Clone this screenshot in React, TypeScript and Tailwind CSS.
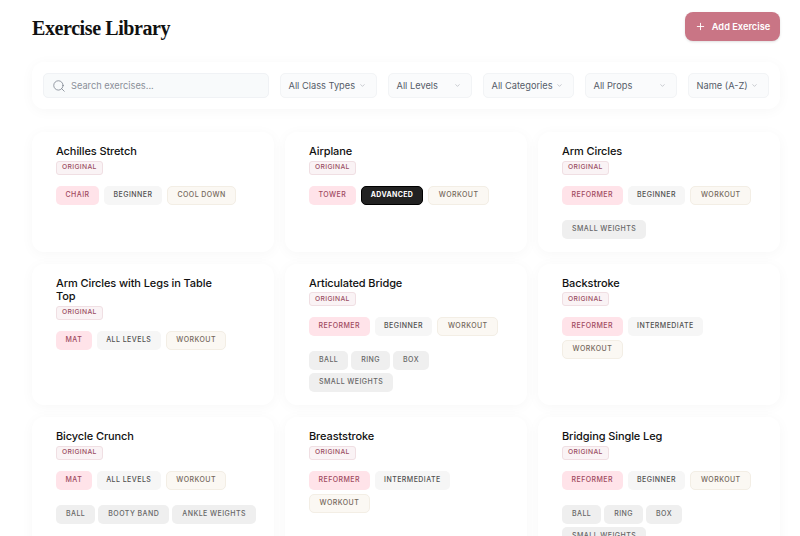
import { ChevronDown, Plus, Search } from "lucide-react";

type Ex = { name: string; a: string; level: string; cat: string; props?: string[] };

const data: Ex[] = [
  { name: "Achilles Stretch", a: "CHAIR", level: "BEGINNER", cat: "COOL DOWN" },
  { name: "Airplane", a: "TOWER", level: "ADVANCED", cat: "WORKOUT" },
  { name: "Arm Circles", a: "REFORMER", level: "BEGINNER", cat: "WORKOUT", props: ["SMALL WEIGHTS"] },
  { name: "Arm Circles with Legs in Table Top", a: "MAT", level: "ALL LEVELS", cat: "WORKOUT" },
  { name: "Articulated Bridge", a: "REFORMER", level: "BEGINNER", cat: "WORKOUT", props: ["BALL", "RING", "BOX", "SMALL WEIGHTS"] },
  { name: "Backstroke", a: "REFORMER", level: "INTERMEDIATE", cat: "WORKOUT" },
  { name: "Bicycle Crunch", a: "MAT", level: "ALL LEVELS", cat: "WORKOUT", props: ["BALL", "BOOTY BAND", "ANKLE WEIGHTS"] },
  { name: "Breaststroke", a: "REFORMER", level: "INTERMEDIATE", cat: "WORKOUT" },
  { name: "Bridging Single Leg", a: "REFORMER", level: "BEGINNER", cat: "WORKOUT", props: ["BALL", "RING", "BOX", "SMALL WEIGHTS"] },
];

const selects = [
  { label: "All Class Types", w: "w-[97px]" },
  { label: "All Levels", w: "w-[84px]" },
  { label: "All Categories", w: "w-[91px]" },
  { label: "All Props", w: "w-[92px]" },
  { label: "Name (A-Z)", w: "w-[81px]" },
];

function Card({ ex }: { ex: Ex }) {
  const advanced = ex.level === "ADVANCED";
  return (
    <div className="rounded-xl bg-white pl-6 pr-4 pt-[13px] pb-[13px] shadow-[0_2px_14px_rgba(0,0,0,0.035)]">
      <h3 className="w-[165px] text-[11px] leading-[13.5px] font-medium tracking-[-0.1px] text-[#111]">{ex.name}</h3>
      <span className="mt-[2px] flex h-[14px] w-fit items-center rounded-[3px] border border-[#f0dfe3] bg-[#faf3f5] px-[5px] text-[6.75px] font-medium tracking-[0.35px] text-[#9a4f63]">
        ORIGINAL
      </span>
      <div className="mt-[11px] flex flex-wrap gap-x-[5px] gap-y-1">
        <span className="flex h-[19px] items-center rounded-[5px] bg-[#ffe3e9] px-[9.5px] text-[7px] font-medium tracking-[0.45px] text-[#a04a60]">
          {ex.a}
        </span>
        {advanced ? (
          <span className="flex h-[19px] items-center rounded-[5px] border border-black bg-[#222] px-[9px] text-[7px] font-bold tracking-[0.35px] text-white">
            {ex.level}
          </span>
        ) : (
          <span className="flex h-[19px] items-center rounded-[5px] bg-[#f6f6f6] px-[9.5px] text-[7px] font-medium tracking-[0.45px] text-[#505050]">
            {ex.level}
          </span>
        )}
        <span className="flex h-[19px] items-center rounded-[5px] border border-[#f3eee5] bg-[#fbf8f3] px-[9.5px] text-[7px] font-medium tracking-[0.45px] text-[#75685c]">
          {ex.cat}
        </span>
      </div>
      {ex.props && (
        <div className="mt-[15px] flex flex-wrap gap-x-[3px] gap-y-[3px]">
          {ex.props.map((p) => (
            <span key={p} className="flex h-[19px] items-center rounded-[5px] bg-[#efefef] px-[10px] text-[7px] font-medium tracking-[0.45px] text-[#666]">
              {p}
            </span>
          ))}
        </div>
      )}
    </div>
  );
}

export default function App() {
  return (
    <div className="h-[536px] w-[800px] overflow-hidden bg-white pl-8 pr-5 pt-3 font-['Inter',sans-serif]">
      <header className="flex h-[29px] items-center justify-between">
        <h1 className="pt-[2px] font-['Liberation_Serif',serif] text-[20px] font-bold tracking-[-0.4px] text-[#111]">Exercise Library</h1>
        <button className="flex h-[29px] w-[95px] items-center justify-center gap-[6px] rounded-lg bg-[#c97585] text-[9.25px] font-semibold text-white shadow-sm">
          <Plus size={11} strokeWidth={2} />
          Add Exercise
        </button>
      </header>

      <section className="mt-[21px] flex h-[47px] items-center gap-[11px] rounded-xl bg-white px-[11px] shadow-[0_2px_14px_rgba(0,0,0,0.035)]">
        <div className="flex h-[25px] w-[226px] items-center gap-[5px] rounded-[5px] border border-[#f0f2f5] bg-[#f8fafb] pl-2">
          <Search size={14} strokeWidth={1.2} className="text-[#6b7280]" />
          <span className="pt-px text-[9.25px] text-[#8a8f98]">Search exercises...</span>
        </div>
        {selects.map((s) => (
          <div key={s.label} className={`flex h-[25px] items-center justify-between rounded-[5px] border border-[#f2f4f6] bg-[#fafbfc] pl-[7.5px] pr-[10px] ${s.w}`}>
            <span className="pt-px text-[9.25px] text-[#555c68]">{s.label}</span>
            <ChevronDown size={7} strokeWidth={1.5} className="text-[#8a8f98]" />
          </div>
        ))}
      </section>

      <main className="mt-[23px] grid grid-cols-3 gap-x-[11px] gap-y-3">
        {data.map((ex) => (
          <Card key={ex.name} ex={ex} />
        ))}
      </main>
    </div>
  );
}
